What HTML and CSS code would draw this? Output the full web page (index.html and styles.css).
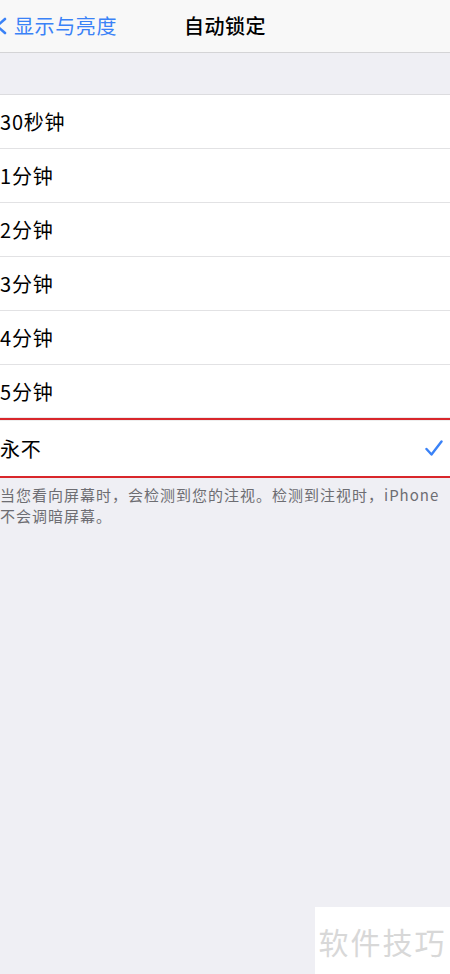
FILE: index.html
```html
<!DOCTYPE html>
<html lang="zh">
<head>
    <meta charset="UTF-8">
    <meta name="viewport" content="width=device-width, initial-scale=1.0">
    <title>自动锁定</title>
    <link rel="stylesheet" href="styles.css">
</head>
<body>
    <div class="nav-bar">
        <div class="nav-back">
            <svg class="chevron" width="8" height="20" viewBox="0 0 8 20" fill="none" stroke="currentColor" stroke-width="2.6" stroke-linecap="round" stroke-linejoin="round">
                <polyline points="5 3 -3 10 5 17"></polyline>
            </svg>
            <span>显示与亮度</span>
        </div>
        <div class="nav-title">自动锁定</div>
    </div>

    <div class="group-gap"></div>

    <div class="option-list">
        <div class="option-row">30秒钟</div>
        <div class="option-row">1分钟</div>
        <div class="option-row">2分钟</div>
        <div class="option-row">3分钟</div>
        <div class="option-row">4分钟</div>
        <div class="option-row last">5分钟</div>
        <div class="option-row selected">
            <span>永不</span>
            <svg class="check" width="18" height="16" viewBox="0 0 18 16" fill="none" stroke="currentColor" stroke-width="2.4" stroke-linecap="round" stroke-linejoin="round">
                <polyline points="1.5 9 6.5 14.5 16.5 1.5"></polyline>
            </svg>
        </div>
    </div>

    <p class="footer-note">当您看向屏幕时，会检测到您的注视。检测到注视时，iPhone不会调暗屏幕。</p>

    <div class="watermark">软件技巧</div>
</body>
</html>
```

FILE: styles.css
```css
body {
    font-family: "Noto Sans CJK SC", "Noto Sans", sans-serif;
    background-color: #efeff4;
    color: #000;
    margin: 0;
    height: 974px;
    overflow: hidden;
    position: relative;
}

.nav-bar {
    height: 52px;
    background-color: #f8f8f8;
    border-bottom: 1px solid #d4d4d6;
    display: flex;
    align-items: center;
    justify-content: center;
    position: relative;
}

.nav-back {
    position: absolute;
    left: 0;
    top: 0;
    height: 52px;
    display: flex;
    align-items: center;
    gap: 6px;
    color: #3a82f7;
    font-size: 20px;
    letter-spacing: 0.6px;
}

.nav-back span {
    margin-top: -2px;
}

.nav-title {
    font-size: 20px;
    font-weight: 500;
    letter-spacing: 0.5px;
    margin-top: -2px;
}

.group-gap {
    height: 41px;
    border-bottom: 1px solid #dcdcdf;
}

.option-list {
    background-color: #fff;
}

.option-row {
    height: 53px;
    border-bottom: 1px solid #e2e2e4;
    display: flex;
    align-items: center;
    justify-content: space-between;
    font-size: 20px;
    letter-spacing: 0.8px;
    padding-right: 7px;
}

.option-row.last {
    height: 52px;
    border-bottom: 1px solid #eaeaec;
}

.option-row.selected {
    height: 56px;
    border-top: 2px solid #d9262b;
    border-bottom: 2px solid #d9262b;
    box-shadow: inset 0 1px 0 #eeeeee;
}

.check {
    color: #3a82f7;
}

.footer-note {
    margin: 6px 6px 0 0;
    font-size: 15px;
    letter-spacing: 1px;
    line-height: 21px;
    color: #6d6d72;
}

.watermark {
    position: absolute;
    left: 315px;
    top: 907px;
    width: 135px;
    height: 67px;
    background-color: #fff;
    color: #d8d8d8;
    font-size: 30px;
    display: flex;
    align-items: center;
    justify-content: center;
    letter-spacing: 2px;
}
```
